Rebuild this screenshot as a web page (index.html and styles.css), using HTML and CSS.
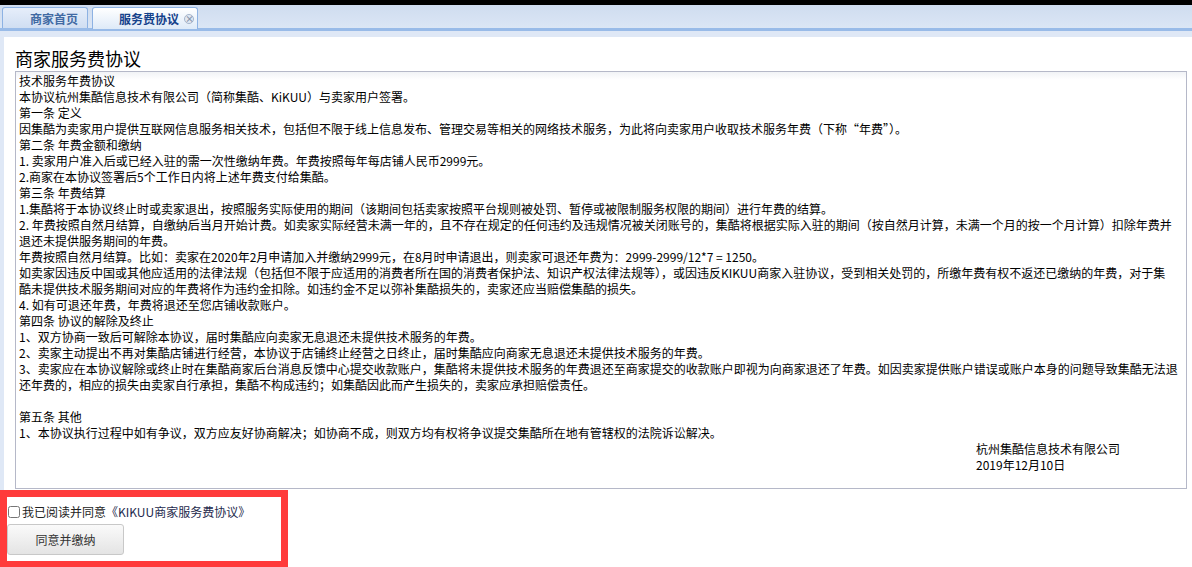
FILE: index.html
```html
<!DOCTYPE html>
<html lang="zh-CN">
<head>
    <meta charset="UTF-8">
    <title>服务费协议</title>
    <link rel="stylesheet" href="styles.css">
</head>
<body>
    <div class="topbar"></div>
    <div class="tabstrip">
        <div class="tab">商家首页</div>
        <div class="tab active">服务费协议<span class="tab-close">&times;</span></div>
    </div>
    <div class="tabline"></div>

    <div class="panel">
        <h1 class="title">商家服务费协议</h1>
        <div class="agreement">
            <p>技术服务年费协议</p>
            <p>本协议杭州集酷信息技术有限公司（简称集酷、KiKUU）与卖家用户签署。</p>
            <p>第一条 定义</p>
            <p>因集酷为卖家用户提供互联网信息服务相关技术，包括但不限于线上信息发布、管理交易等相关的网络技术服务，为此将向卖家用户收取技术服务年费（下称“年费”）。</p>
            <p>第二条 年费金额和缴纳</p>
            <p>1. 卖家用户准入后或已经入驻的需一次性缴纳年费。年费按照每年每店铺人民币2999元。</p>
            <p>2.商家在本协议签署后5个工作日内将上述年费支付给集酷。</p>
            <p>第三条 年费结算</p>
            <p>1.集酷将于本协议终止时或卖家退出，按照服务实际使用的期间（该期间包括卖家按照平台规则被处罚、暂停或被限制服务权限的期间）进行年费的结算。</p>
            <p>2. 年费按照自然月结算，自缴纳后当月开始计费。如卖家实际经营未满一年的，且不存在规定的任何违约及违规情况被关闭账号的，集酷将根据实际入驻的期间（按自然月计算，未满一个月的按一个月计算）扣除年费并退还未提供服务期间的年费。</p>
            <p>年费按照自然月结算。比如：卖家在2020年2月申请加入并缴纳2999元，在8月时申请退出，则卖家可退还年费为：2999-2999/12*7 = 1250。</p>
            <p>如卖家因违反中国或其他应适用的法律法规（包括但不限于应适用的消费者所在国的消费者保护法、知识产权法律法规等），或因违反KIKUU商家入驻协议，受到相关处罚的，所缴年费有权不返还已缴纳的年费，对于集<br>酷未提供技术服务期间对应的年费将作为违约金扣除。如违约金不足以弥补集酷损失的，卖家还应当赔偿集酷的损失。</p>
            <p>4. 如有可退还年费，年费将退还至您店铺收款账户。</p>
            <p>第四条 协议的解除及终止</p>
            <p>1、双方协商一致后可解除本协议，届时集酷应向卖家无息退还未提供技术服务的年费。</p>
            <p>2、卖家主动提出不再对集酷店铺进行经营，本协议于店铺终止经营之日终止，届时集酷应向商家无息退还未提供技术服务的年费。</p>
            <p>3、卖家应在本协议解除或终止时在集酷商家后台消息反馈中心提交收款账户，集酷将未提供技术服务的年费退还至商家提交的收款账户即视为向商家退还了年费。如因卖家提供账户错误或账户本身的问题导致集酷无法退还年费的，相应的损失由卖家自行承担，集酷不构成违约；如集酷因此而产生损失的，卖家应承担赔偿责任。</p>
            <p>&nbsp;</p>
            <p>第五条 其他</p>
            <p>1、本协议执行过程中如有争议，双方应友好协商解决；如协商不成，则双方均有权将争议提交集酷所在地有管辖权的法院诉讼解决。</p>
            <p class="sign">杭州集酷信息技术有限公司</p>
            <p class="sign">2019年12月10日</p>
        </div>

        <div class="confirm">
            <label class="agree">
                <input type="checkbox" class="agree-box">
                <span>我已阅读并同意<span class="agree-link">《KIKUU商家服务费协议》</span></span>
            </label>
            <button class="pay-btn">同意并缴纳</button>
        </div>
    </div>

    <div class="highlight"></div>
</body>
</html>
```

FILE: styles.css
```css
body {
    margin: 0;
    padding: 0;
    font-family: "Noto Sans CJK SC", "Liberation Sans", sans-serif;
    font-size: 12px;
    color: #000;
    background: #dfe8f6;
    height: 567px;
    overflow: hidden;
    position: relative;
}
.topbar {
    height: 5px;
    background: #000;
}
.tabstrip {
    display: flex;
    gap: 4px;
    height: 23px;
    padding: 2px 0 0 2px;
    box-sizing: border-box;
    background: linear-gradient(#cfdcef, #dbe6f5);
}
.tab {
    box-sizing: border-box;
    width: 86px;
    height: 21px;
    padding: 0 9px 0 0;
    border: 1px solid #8db2e3;
    border-bottom: none;
    border-radius: 3px 3px 0 0;
    background: linear-gradient(#e6eefa, #d0def2);
    color: #416aa3;
    font-weight: bold;
    white-space: nowrap;
    display: flex;
    align-items: center;
    justify-content: flex-end;
}
.tab.active {
    width: 106px;
    height: 22px;
    padding-right: 3px;
    gap: 5px;
    background: linear-gradient(#ffffff, #deeaf8);
    color: #15428b;
}
.tab-close {
    box-sizing: border-box;
    width: 10px;
    height: 10px;
    border: 1px solid #a4b5cc;
    border-radius: 50%;
    background: #e3e9f2;
    color: #8797ad;
    font-size: 9px;
    line-height: 8px;
    text-align: center;
    font-weight: bold;
}
.tabline {
    height: 3px;
    background: #99bbe8;
    border-bottom: 6px solid #dfe8f6;
}
.panel {
    margin-left: 4px;
    background: #fff;
    height: 530px;
    padding: 9px 0 0 11px;
    box-sizing: border-box;
}
.title {
    margin: 0;
    font-size: 18px;
    font-weight: normal;
    line-height: 25px;
}
.agreement {
    width: 1161px;
    height: 415px;
    border: 1px solid #b5b8c8;
    padding: 1px 6px 0 3px;
    background: linear-gradient(#f1f3f6, #fff 8px);
}
.agreement p {
    margin: 0;
    line-height: 16px;
}
.agreement .sign {
    padding-left: 957px;
}
.confirm {
    padding: 14px 0 0 0;
    margin-left: -11px;
    display: flex;
    flex-direction: column;
    align-items: flex-start;
}
.agree {
    display: flex;
    align-items: center;
    gap: 2px;
    color: #222;
    padding-left: 4px;
}
.agree-box {
    width: 12px;
    height: 12px;
    margin: 0;
}
.agree-link {
    color: #1e2a4d;
}
.pay-btn {
    margin: 4px 0 0 3px;
    width: 117px;
    height: 31px;
    border: 1px solid #c8c8c8;
    border-radius: 3px;
    background: linear-gradient(#fafafa, #e4e4e4);
    color: #333;
    font-family: inherit;
    font-size: 12px;
}
.highlight {
    position: absolute;
    left: 0;
    top: 490px;
    width: 274px;
    height: 64px;
    border: 7px solid #ff3b3b;
    pointer-events: none;
}
```
